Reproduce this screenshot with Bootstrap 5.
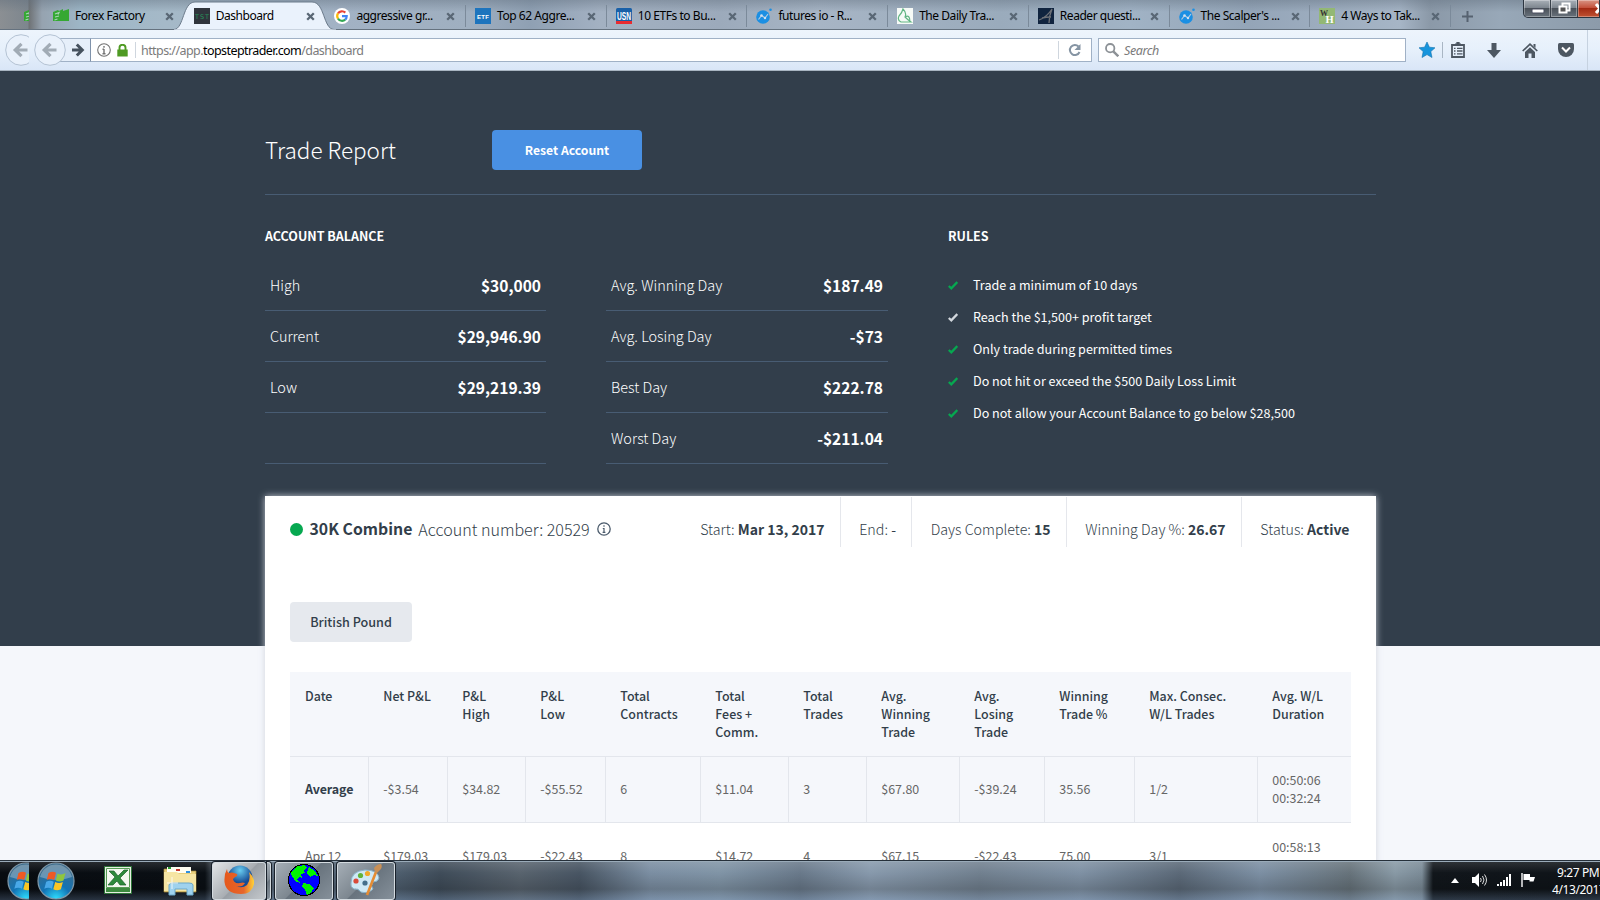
<!DOCTYPE html>
<html lang="en">
<head>
<meta charset="utf-8">
<title>Dashboard</title>
<link rel="stylesheet" href="https://cdn.jsdelivr.net/npm/bootstrap@5.3.0/dist/css/bootstrap.min.css">
<script src="https://cdn.jsdelivr.net/npm/bootstrap@5.3.0/dist/js/bootstrap.bundle.min.js"></script>
<style>
:root{--ui:"Noto Sans","Open Sans",sans-serif;--site:"Noto Sans CJK SC","Noto Sans",sans-serif}
html,body{height:900px;overflow:hidden}
body{font-family:var(--site);background:#f5f7fb;color:#323e4a}
svg{display:block;flex:none}
/* title bar */
.titlebar{height:30px;font:12px/16px var(--ui);color:#000;border-bottom:1px solid #65727f;
 background:linear-gradient(90deg,#8b8f93 0,#7d868e 28px,#6e7275 29px,#96a3b0 42px,#9db6c6 80px,#a5b9c8 165px,#a2b2c4 340px,#9fafc0 470px,#8fa0b3 530px,#a3b1c2 600px,#9caabb 720px,#a7b5c5 820px,#9aabbc 1000px,#a1b3c5 1130px,#94a5b8 1250px,#a6b5c6 1400px,#8b99a8 1430px,#98a8b8 1500px,#8c9baa 1600px)}
.titlebar:before{content:"";position:absolute;left:0;top:0;width:1600px;height:12px;background:linear-gradient(#5d6b7a66,#5d6b7a00)}
.strip{width:29px;overflow:hidden;flex:none}
.tabs-row{padding-left:14px;z-index:1}
.tab{width:140.7px;height:29px;padding:3px 0 0 10px;flex:none;position:relative}
.tab .ico{width:16px;height:16px;margin-right:6px}
.tab .ttl{width:84px;white-space:nowrap;letter-spacing:-.45px}
.tab .x{margin-left:6px}
.tab+.tab.sep:before{content:"";position:absolute;left:0;top:5px;width:1px;height:22px;background:#7b8a9a}
.tab.act>*{position:relative}
.tab.act .shape{position:absolute;left:-10px;top:1px}
.winctl{position:absolute;left:1523px;top:0;width:77px;height:18px;border:1px solid #2c3540;border-top:0;border-radius:0 0 0 5px;overflow:hidden;background:linear-gradient(#a9b0b8,#7e868f 45%,#4a5159 50%,#69727c)}
.winctl>div{width:27px;height:17px;border-right:1px solid #39414a;flex:none;box-shadow:inset 0 0 0 1px #ffffff50}
.winctl .cl{background:linear-gradient(#d99484,#c3513b 45%,#a32a13 50%,#c05232)}
/* toolbar */
.toolbar{height:41px;background:linear-gradient(#edf4fc,#e6f0fb 50%,#d9e6f7);border-bottom:1px solid #a8b4c1;font:12.500px/18px var(--ui)}
.toolbar>*{flex:none}
.field{height:24px;background:#fff;border:1px solid #a0b1c6}
.fwd{width:40px;height:24px;border:1px solid #a0b1c6;border-right-color:#7f92aa;border-left:0;background:#e6effa;margin-left:-15px}
.url{color:#7b7b7b;letter-spacing:-.57px;white-space:nowrap;padding-top:2px}
.url b{font-weight:400;color:#000}
.vr1{width:1px;background:#cfd6de;flex:none}
/* site */
.site{height:790px;position:relative;overflow:hidden;background:linear-gradient(#323e4b 575px,#f5f7fb 575px)}
.wrap{width:1111px;margin-left:265px}
.rep-head{height:124px;padding-top:59px;border-bottom:1px solid #485c73}
.rep-head h1{font-size:22.500px;line-height:38px;font-weight:300;color:#fff;width:227px}
.btn-reset{width:150px;height:40px;background:#4990e3;color:#fff;border:0;border-radius:4px;font-size:12.200px;font-weight:700;line-height:40px;padding:0}
.cols{height:301px;padding-top:31px;color:#fff}
.cap-t{font-size:12.500px;font-weight:700;line-height:19px;height:34px}
.bal{width:281px}
.bal .brow{height:51px;padding:0 5px;border-bottom:1px solid #485c73;font-size:14.450px;line-height:50px;font-weight:300}
.bal b{font-weight:700;font-size:15.550px;line-height:51px}
.rule-i{height:32px;font-size:12.570px;line-height:32px;white-space:nowrap}
.rule-i svg{margin-right:15px}
.panel{background:#fff;height:500px;padding:0 25px;box-shadow:0 0 7px rgba(225,228,240,.85),0 0 5px rgba(0,0,0,.12)}
.combo{height:51px;padding-top:1px;white-space:nowrap}
.combo .nm{font-size:15.800px;font-weight:700;margin:0 6px 0 6.500px}
.combo .an{font-size:16.080px;font-weight:300;margin-right:7px}
.dot{width:13px;height:13px;border-radius:50%;background:#06a850}
.stat{height:50px;line-height:64px;font-size:14.250px;font-weight:300;padding:0 15px 0 18.700px;border-right:1px solid #e5e7ec;white-space:nowrap}
.stat:last-child{border:0;padding-right:1.500px}
.stat b{font-weight:700;font-size:14px}
.btn-inst{margin-top:55px;width:122px;height:40px;background:#e6e9ee;border:0;border-radius:4px;font-size:12.600px;font-weight:500;line-height:40px;padding:0;color:#323e4a}
.grid-t{margin-top:30px;width:1061px;table-layout:fixed;border-collapse:separate;border-spacing:0;font-size:12.450px;line-height:18px}
.grid-t th,.grid-t td{padding:15px 0 15px 14.300px;border-bottom:1px solid #e3e6ec}
.grid-t th:first-child,.grid-t td:first-child{padding-left:15px}
.grid-t th{font-weight:500;vertical-align:top;color:#323e4a}
.grid-t td{color:#666;border-right:1px solid #e3e6ec;vertical-align:middle}
.grid-t .avg td{padding-top:14px}
.grid-t td:first-child{letter-spacing:-.08px}
.grid-t td:last-child{border-right:0}
.grid-t thead,.grid-t .avg{background:#f5f7fb}
.grid-t tr:last-child td{border-right-color:transparent}
/* taskbar */
.taskbar{height:39px;box-shadow:0 -1px 0 #26303a,inset 0 1px 0 #9aabb9;position:relative;
 background:linear-gradient(180deg,#ffffff22,#ffffff00 12px,#00000028 28px,#7f9cc244 39px),linear-gradient(90deg,#080c11 0,#0a0f14 205px,#6a7784 220px,#59697a 275px,#4d5d6d 400px,#3f4c59 440px,#58636e 520px,#485563 580px,#7b8ea2 650px,#8094a6 720px,#69798a 800px,#8799ac 870px,#71808f 980px,#7f91a4 1080px,#5b6978 1180px,#7c8fa3 1260px,#67737b 1350px,#8899a5 1395px,#7b8b97 1422px,#11161b 1433px,#0e1318 1600px)}
.tk{height:38px;border:1px solid #d4dbe0;border-radius:3px;box-shadow:0 0 0 1px #18202a;background:linear-gradient(135deg,#a5aeb6,#7d8790 48%,#68737d 50%,#85909a);flex:none}
.tk svg{margin-top:-2px}
.clock{font:12px/17px var(--ui);color:#fff;letter-spacing:-.4px;position:absolute;left:1552px;top:3px;white-space:nowrap}
</style>
</head>
<body>
<svg width="0" height="0" class="position-absolute"><defs>
<symbol id="x" viewBox="0 0 9 9"><path d="M1.200 1.200l6.600 6.600M7.800 1.200L1.200 7.800" stroke="#596775" stroke-width="2.300"/></symbol>
<symbol id="ff" viewBox="0 0 16 16"><path d="M0 4l5-2 1 1 4-2v2l6-2v12H0z" fill="#35a833"/><path d="M2 6l4-1.500-1 2M2 9l4-1M1.500 12l3-1" stroke="#a9d5b6" stroke-width="1.200" fill="none"/></symbol>
<symbol id="fio" viewBox="0 0 16 16"><circle cx="7" cy="9" r="6.800" fill="#1b8fe3"/><circle cx="14.500" cy="1.800" r="1.300" fill="#1b8fe3"/><path d="M2.500 11.500L5.500 7.500 9 10l3-4" stroke="#b3cbe0" stroke-width="1.200" fill="none"/><circle cx="5.500" cy="7.500" r="1.300" fill="#cfe0f0"/><circle cx="9" cy="10" r="1.200" fill="#cfe0f0"/></symbol>
<symbol id="bk" viewBox="0 0 32 32"><circle cx="16" cy="16" r="15.300" fill="#e9f1fb" stroke="#b4c2d3"/><path d="M10 16h12.500M16.500 9.800L10.200 16l6.300 6.200" stroke="#a1abb5" stroke-width="3.200" fill="none"/></symbol>
<symbol id="ok" viewBox="0 0 10 9"><path d="M.8 5l2.500 2.300L9.300 1" fill="none" stroke="currentColor" stroke-width="2.300"/></symbol>
<radialGradient id="og" cx=".5" cy="1" r=".9"><stop offset="0" stop-color="#2fe0ff"/><stop offset=".45" stop-color="#1273b5"/><stop offset="1" stop-color="#3c6c8c"/></radialGradient>
<symbol id="orb" viewBox="0 0 38 38"><circle cx="19" cy="19" r="18" fill="url(#og)" stroke="#8098a8" stroke-width="1.200"/><path d="M3 15a16.500 16.500 0 0 1 32 0q-16 6-32 0z" fill="#fff" opacity=".28"/><path d="M11.500 11q4-2.200 7.500-.3l-1.800 7.300q-3.700-1.800-7.500 0z" fill="#ee5a24"/><path d="M20.500 11.500q4 2 8-.5l-2 7.500q-4 2-7.700 0z" fill="#8fc63e"/><path d="M9.200 19.800q3.800-2 7.500-.1L15 26.800q-3.700-2-7.700 0z" fill="#49a8e8"/><path d="M18.200 20q3.800 2 7.700 0l-2 7.300q-4 2-7.600-.1z" fill="#fcc624"/></symbol>
</defs></svg>

<header class="titlebar d-flex position-relative">
 <div class="strip d-flex align-items-center" style="padding-left:24px"><svg width="16" height="16" style="margin-top:3px"><use href="#ff"/></svg></div>
 <div class="tabs-row d-flex position-relative">
  <div class="tab d-flex align-items-center"><svg class="ico"><use href="#ff"/></svg><span class="ttl">Forex Factory</span><svg class="x" width="9" height="9"><use href="#x"/></svg></div>
  <div class="tab act d-flex align-items-center"><svg class="shape" width="162" height="29" viewBox="0 0 162 29"><path d="M0 28.500C10 28 8.500 1 21 1H138C151 1 149 28 160 28.500V29H0z" fill="#eaf2fc" stroke="#6b7a8a"/><path d="M0 29h162" stroke="#eaf2fc"/></svg><svg class="ico" viewBox="0 0 16 16"><path d="M0 0h16v16H0z" fill="#2f343c"/><text x="1" y="10.500" font-size="6.500" textLength="14" font-family="DejaVu Sans" fill="#27915a">TST</text></svg><span class="ttl">Dashboard</span><svg class="x" width="9" height="9"><use href="#x"/></svg></div>
  <div class="tab d-flex align-items-center"><svg class="ico" viewBox="0 0 16 16"><circle cx="8" cy="8" r="8" fill="#fff"/><g fill="none" stroke-width="2.200"><path d="M4 5.400A4.800 4.800 0 0 1 11.300 4.600" stroke="#ea4335"/><path d="M4 5.400a4.800 4.800 0 0 0 0 5.200" stroke="#fbbc05"/><path d="M4 10.600a4.800 4.800 0 0 0 7.200 1" stroke="#34a853"/><path d="M8 8.200h4.700a4.800 4.800 0 0 1-1.500 3.400" stroke="#4285f4"/></g></svg><span class="ttl">aggressive gr...</span><svg class="x" width="9" height="9"><use href="#x"/></svg></div>
  <div class="tab sep d-flex align-items-center"><svg class="ico" viewBox="0 0 16 16"><path d="M0 0h16v16H0z" fill="#1d74bd"/><text x="2" y="10.500" font-size="6" font-weight="700" textLength="12" font-family="Liberation Sans" fill="#fff">ETF</text></svg><span class="ttl">Top 62 Aggre...</span><svg class="x" width="9" height="9"><use href="#x"/></svg></div>
  <div class="tab sep d-flex align-items-center"><svg class="ico" viewBox="0 0 16 16"><rect width="16" height="16" rx="1.500" fill="#1960a8"/><path d="M0 13h16v3H0z" fill="#e92b30"/><text x="1" y="11.500" font-size="10" font-weight="700" textLength="14" lengthAdjust="spacingAndGlyphs" font-family="Liberation Sans" fill="#fff">USN</text></svg><span class="ttl">10 ETFs to Bu...</span><svg class="x" width="9" height="9"><use href="#x"/></svg></div>
  <div class="tab sep d-flex align-items-center"><svg class="ico"><use href="#fio"/></svg><span class="ttl">futures io - R...</span><svg class="x" width="9" height="9"><use href="#x"/></svg></div>
  <div class="tab sep d-flex align-items-center"><svg class="ico" viewBox="0 0 16 16"><path d="M0 0h16v16H0z" fill="#f6faf7"/><path d="M6 1q4 4 2 8 3 3 6 5H4Q0 12 2 8q3-3 4-7zM8 9q5-3 5 5" fill="none" stroke="#62b584" stroke-width="1.200"/></svg><span class="ttl">The Daily Tra...</span><svg class="x" width="9" height="9"><use href="#x"/></svg></div>
  <div class="tab sep d-flex align-items-center"><svg class="ico" viewBox="0 0 16 16"><path d="M0 0h16v16H0z" fill="#10243f"/><path d="M1 12Q9 9 14 1q-3 7-3 14M4 10q4-1 9-1" fill="none" stroke="#6d7178" stroke-width="1.300"/></svg><span class="ttl">Reader questi...</span><svg class="x" width="9" height="9"><use href="#x"/></svg></div>
  <div class="tab sep d-flex align-items-center"><svg class="ico"><use href="#fio"/></svg><span class="ttl">The Scalper's ...</span><svg class="x" width="9" height="9"><use href="#x"/></svg></div>
  <div class="tab sep d-flex align-items-center"><svg class="ico" viewBox="0 0 16 16"><path d="M0 0h16v16H0z" fill="#93b874"/><text x="1" y="7.500" font-size="8" font-weight="700" font-family="Liberation Serif" fill="#333">W</text><text x="6.500" y="15" font-size="10.500" font-weight="700" font-family="Liberation Serif" fill="#fff">H</text></svg><span class="ttl">4 Ways to Tak...</span><svg class="x" width="9" height="9"><use href="#x"/></svg></div>
  <div class="tab sep d-flex align-items-center ps-0"><svg width="11" height="11" viewBox="0 0 11 11" style="margin-left:12.500px"><path d="M5.500 0v11M0 5.500h11" stroke="#566270" stroke-width="2"/></svg></div>
 </div>
 <div class="winctl d-flex" style="z-index:2"><div><svg width="27" height="17"><rect x="8" y="9" width="12" height="4" rx="1" fill="#fff" stroke="#4b4f60"/></svg></div><div><svg width="27" height="17"><path d="M11.500 3.500h7v7h-7z" fill="none" stroke="#fff" stroke-width="2"/><path d="M8.500 6.500h7v6h-7z" fill="#555" stroke="#fff" stroke-width="2"/></svg></div><div class="cl"><svg width="27" height="17"><path d="M18 4l8 9M26 4l-8 9" stroke="#fff" stroke-width="3"/></svg></div></div>
</header>

<nav class="toolbar d-flex align-items-center">
 <div class="strip"><svg width="32" height="32" style="margin-left:5px"><use href="#bk"/></svg></div>
 <svg class="position-relative z-1" width="32" height="32" style="margin-left:5px"><use href="#bk"/></svg>
 <div class="fwd"><svg width="39" height="22" viewBox="0 0 39 22"><path d="M21 11H31M25.800 5.500l5.500 5.500-5.500 5.500" stroke="#46525f" stroke-width="3" fill="none"/></svg></div>
 <div class="field border-start-0 d-flex align-items-center" style="width:1001px">
  <svg width="14" height="14" style="margin-left:6px" viewBox="0 0 14 14"><circle cx="7" cy="7" r="6.300" fill="none" stroke="#737373" stroke-width="1.100"/><path d="M7 6v5M7 3v1.700M5.500 6.300H7M5.500 10.700h3" stroke="#737373" stroke-width="1.400"/></svg>
  <svg width="11" height="13" style="margin-left:6px" viewBox="0 0 11 13"><path d="M.3 5.500h10.400V12.500H.3z" fill="#4f9a23"/><path d="M2.500 6V3.800a3 3 0 0 1 6 0V6" fill="none" stroke="#4f9a23" stroke-width="1.900"/></svg>
  <div class="vr1" style="height:16px;margin:0 5px 0 7px"></div>
  <span class="url">https://app.<b>topsteptrader.com</b>/dashboard</span>
  <div class="vr1 ms-auto" style="height:18px"></div>
  <svg width="14" height="14" viewBox="0 0 14 14" style="margin:0 9px 0 9px"><path d="M11.500 9A5 5 0 1 1 10.500 3.500" fill="none" stroke="#8594a3" stroke-width="2"/><path d="M12.500 1v6h-6z" fill="#8594a3"/></svg>
 </div>
 <div class="field d-flex align-items-center" style="width:308px;margin-left:6px"><svg width="14" height="14" viewBox="0 0 14 14" style="margin:0 5px 0 6px"><circle cx="5.200" cy="5.200" r="4.200" fill="none" stroke="#8c9196" stroke-width="1.800"/><path d="M8.300 8.300l5 5" stroke="#8c9196" stroke-width="2.400"/></svg><i class="url" style="letter-spacing:-.4px">Search</i></div>
 <svg width="16" height="16" viewBox="0 0 16 16" style="margin-left:13px"><path d="M8 0l2.400 5.200 5.600.6-4.200 3.800L13 15.500 8 12.600 3 15.500l1.200-5.900L0 5.800l5.600-.6z" fill="#1795dd" stroke="#1272ad" stroke-width=".6"/></svg>
 <div class="vr1" style="height:16px;margin:0 8px 0 7px;background:#a9b6c4"></div>
 <svg width="14" height="16" viewBox="0 0 14 16"><path d="M1 3h12v12H1z" fill="none" stroke="#4d5762" stroke-width="1.800"/><path d="M4 1.500h6v2H4z" fill="#4d5762"/><path d="M6 0h2v2H6zM3 6.300h1.500M6 6.300h5.500M3 9h1.500M6 9h5.500M3 11.800h1.500M6 11.800h5.500" fill="#4d5762" stroke="#4d5762" stroke-width="1.300"/></svg>
 <svg width="14" height="15" viewBox="0 0 14 15" style="margin-left:22px"><path d="M4.500 0h5v7H14l-7 8L0 7h4.500z" fill="#4d5762"/></svg>
 <svg width="16" height="15" viewBox="0 0 16 15" style="margin-left:21px"><path d="M.7 8L8 1.200 15.300 8" fill="none" stroke="#4d5762" stroke-width="1.700"/><path d="M3 9l5-4.700L13 9V15H9.500v-4.500h-3V15H3z" fill="#4d5762"/><path d="M11.500 1h2v4l-2-2z" fill="#4d5762"/></svg>
 <svg width="16" height="14" viewBox="0 0 16 14" style="margin-left:20px"><path d="M1.500 0h13Q16 0 16 1.500V6a8 8 0 0 1-16 0V1.500Q0 0 1.500 0z" fill="#4d5762"/><path d="M4 4.500l4 4 4-4" fill="none" stroke="#fff" stroke-width="2"/></svg>
 <div class="vr1" style="height:40px;margin-left:13px;background:#c6d2e0"></div>
</nav>

<main class="site">
 <div class="wrap">
  <div class="rep-head d-flex"><h1 class="m-0">Trade Report</h1><button class="btn btn-reset">Reset Account</button></div>
  <section class="cols d-flex">
   <div class="bal" style="margin-right:60px"><div class="cap-t">ACCOUNT BALANCE</div>
    <div class="brow d-flex justify-content-between">High<b>$30,000</b></div><div class="brow d-flex justify-content-between">Current<b>$29,946.90</b></div><div class="brow d-flex justify-content-between">Low<b>$29,219.39</b></div><div class="brow"></div></div>
   <div class="bal" style="margin-right:60px;width:282px;padding-top:34px">
    <div class="brow d-flex justify-content-between">Avg. Winning Day<b>$187.49</b></div><div class="brow d-flex justify-content-between">Avg. Losing Day<b>-$73</b></div><div class="brow d-flex justify-content-between">Best Day<b>$222.78</b></div><div class="brow d-flex justify-content-between">Worst Day<b>-$211.04</b></div></div>
   <div><div class="cap-t" style="height:43px">RULES</div>
    <div class="rule-i d-flex align-items-center"><svg width="10" height="9" color="#06a850"><use href="#ok"/></svg>Trade a minimum of 10 days</div>
    <div class="rule-i d-flex align-items-center"><svg width="10" height="9" color="#d3d8de"><use href="#ok"/></svg>Reach the $1,500+ profit target</div>
    <div class="rule-i d-flex align-items-center"><svg width="10" height="9" color="#06a850"><use href="#ok"/></svg>Only trade during permitted times</div>
    <div class="rule-i d-flex align-items-center"><svg width="10" height="9" color="#06a850"><use href="#ok"/></svg>Do not hit or exceed the $500 Daily Loss Limit</div>
    <div class="rule-i d-flex align-items-center"><svg width="10" height="9" color="#06a850"><use href="#ok"/></svg>Do not allow your Account Balance to go below $28,500</div>
   </div>
  </section>
  <section class="panel">
   <div class="combo d-flex">
    <div class="d-flex align-items-center me-auto" style="height:64px"><span class="dot"></span><span class="nm">30K Combine</span><span class="an">Account number: 20529</span><svg width="14" height="14" viewBox="0 0 14 14"><circle cx="7" cy="7" r="6.200" fill="none" stroke="#4a5a6b" stroke-width="1.300"/><path d="M7 6v4.500M7 3.300v1.500M5.800 6.500H7M5.600 10.300h2.800" stroke="#4a5a6b" stroke-width="1.200"/></svg></div>
    <div class="stat">Start: <b>Mar 13, 2017</b></div><div class="stat">End: <b class="fw-normal">-</b></div><div class="stat">Days Complete: <b>15</b></div><div class="stat">Winning Day %: <b>26.67</b></div><div class="stat">Status: <b>Active</b></div>
   </div>
   <button class="btn btn-inst d-block">British Pound</button>
   <table class="grid-t">
    <colgroup><col style="width:79px"><col style="width:79px"><col style="width:78px"><col style="width:80px"><col style="width:95px"><col style="width:88px"><col style="width:78px"><col style="width:93px"><col style="width:85px"><col style="width:90px"><col style="width:123px"><col style="width:93px"></colgroup>
    <thead><tr><th>Date</th><th>Net P&amp;L</th><th>P&amp;L<br>High</th><th>P&amp;L<br>Low</th><th>Total<br>Contracts</th><th>Total<br>Fees +<br>Comm.</th><th>Total<br>Trades</th><th>Avg.<br>Winning<br>Trade</th><th>Avg.<br>Losing<br>Trade</th><th>Winning<br>Trade %</th><th>Max. Consec.<br>W/L Trades</th><th>Avg. W/L<br>Duration</th></tr></thead>
    <tbody><tr class="avg"><td class="fw-bold" style="color:#323e4a">Average</td><td>-$3.54</td><td>$34.82</td><td>-$55.52</td><td>6</td><td>$11.04</td><td>3</td><td>$67.80</td><td>-$39.24</td><td>35.56</td><td>1/2</td><td>00:50:06<br>00:32:24</td></tr>
    <tr><td>Apr 12</td><td>$179.03</td><td>$179.03</td><td>-$22.43</td><td>8</td><td>$14.72</td><td>4</td><td>$67.15</td><td>-$22.43</td><td>75.00</td><td>3/1</td><td>00:58:13<br>&nbsp;</td></tr></tbody>
   </table>
  </section>
 </div>
</main>

<footer class="taskbar d-flex align-items-center">
 <div class="strip"><svg width="38" height="38" style="margin-left:7px"><use href="#orb"/></svg></div>
 <svg width="38" height="38" style="margin-left:8px"><use href="#orb"/></svg>
 <svg width="28" height="28" viewBox="0 0 28 28" style="margin:-2px 0 0 29px"><path d="M.5.5h27v27H.5z" fill="#e6efe2" stroke="#2d7537"/><path d="M2 22h24v4H2z" fill="#3c8a3e"/><path d="M2.500 2.500h23v19h-23z" fill="#f3f8f0" stroke="#579b55"/><path d="M5 5h5l4 5 6-6h4l-8 8 6 7h-6l-3-4-4 4H4l7-8z" fill="#2d8a3b" stroke="#1b5e28" stroke-width=".7"/></svg>
 <svg width="34" height="32" viewBox="0 0 34 32" style="margin-left:31px"><path d="M1 4h9l2 2h21v21H1z" fill="#e9cf7c" stroke="#a88b3f" stroke-width=".7"/><path d="M4 2h24v6H4z" fill="#fffef2"/><path d="M5 2h3v2H5z" fill="#2aa02f"/><path d="M13 4h4v2h-4z" fill="#c8372d"/><path d="M23 6h4v2h-4z" fill="#2e8fe0"/><path d="M1 7h13l2 2h17v17H1z" fill="#f6e5a3"/><path d="M6 30V20q0-2 4-2h16q4 0 4 2v10h-6v-6H12v6z" fill="#9fd2ee" stroke="#6aa8cb"/><path d="M9 12v12M4 18h11" stroke="#fff" opacity=".8"/></svg>
 <div class="tk d-flex justify-content-center align-items-center" style="width:54px;margin-left:15px;background:linear-gradient(135deg,#e2e5e7,#a9aeb3 50%,#999fa5 52%,#c4c8cc)"><svg width="30" height="30" viewBox="0 0 30 30"><defs><radialGradient id="fb" cx=".5" cy=".2"><stop offset="0" stop-color="#68cdf0"/><stop offset="1" stop-color="#174b94"/></radialGradient><linearGradient id="fo" x2="1" y2="0"><stop offset="0" stop-color="#e5581b"/><stop offset=".65" stop-color="#e7662c"/><stop offset="1" stop-color="#ffd338"/></linearGradient></defs><circle cx="16" cy="13" r="12.500" fill="url(#fb)"/><path d="M3 4q0 3 2 4 3-1 5 0l3 1q1 2-2 3l-2 2q1 5 7 4 3-1 5 0-3 5-9 3 6 3 11-1 4-5 2-13 6 6 5 12-2 10-13 10Q2 29 .5 17 0 9 3 4z" fill="url(#fo)"/></svg></div>
 <div class="tk" style="width:4px;border-left:0;margin-left:1px;border-radius:0 3px 3px 0"></div>
 <div class="tk d-flex justify-content-center align-items-center" style="width:58px;margin-left:4px"><svg width="32" height="32" viewBox="0 0 32 32" shape-rendering="crispEdges"><circle cx="16" cy="16" r="15.500" fill="#00f" stroke="#000"/><path d="M4 7l6-5 7-1 2 3-3 2 1 3-4 1 1 4-3-1-2 3 3 3-5-2-4-7zM21 3l6 4 3 5-4-1-4 2-3-4zM15 19l6 1 5 4-3 5-4 2-2-5-3-3z" fill="#00f300"/></svg></div>
 <div class="tk d-flex justify-content-center align-items-center" style="width:58px;margin-left:4px"><svg width="34" height="34" viewBox="0 0 34 34"><path d="M2 20Q2 8 16 7q13 0 14 8-1 4-6 4-3 4 0 7-5 5-12 3-3-4-7-3-4-2-3-6z" fill="#cfe9f5" stroke="#8ab4cb"/><circle cx="7" cy="18" r="2.600" fill="#d94b3a"/><circle cx="11.500" cy="12.500" r="2.600" fill="#62b33b"/><circle cx="18.500" cy="10.500" r="2.600" fill="#f0a92c"/><circle cx="16" cy="20" r="2.600" fill="#456f8a"/><path d="M18 32l9-23" stroke="#e58c33" stroke-width="2.600"/><path d="M26 9l-1-4q3-4 7-4 2 3-1 6l-3 3z" fill="#c99056"/></svg></div>
 <div class="d-flex align-items-center position-absolute" style="left:1451px;top:12px"><svg width="8" height="5"><path d="M0 5l4-5 4 5z" fill="#fff"/></svg><svg width="15" height="14" viewBox="0 0 15 14" style="margin-left:13px"><path d="M0 4h3l4-4v14l-4-4H0z" fill="#fff"/><path d="M8.500 5q1.500 2 0 4M10.500 3q3 4 0 8M12.500 1.500q4 5.500 0 11" stroke="#ddd" fill="none"/></svg><svg width="15" height="12" viewBox="0 0 15 12" style="margin-left:10px"><path d="M0 10h2v2H0zM3 8h2v4H3zM6 6h2v6H6zM9 3h2v9H9zM12 0h2v12h-2z" fill="#fff"/></svg><svg width="15" height="14" viewBox="0 0 15 14" style="margin-left:9px"><path d="M1 0v14" stroke="#fff" stroke-width="1.400"/><path d="M2.500 1H9v3h5l-1.500 4.500H8.500V7h-6z" fill="#fff"/></svg></div>
 <div class="clock"><div style="padding-left:5px">9:27 PM</div>4/13/2017</div>
</footer>
</body>
</html>
